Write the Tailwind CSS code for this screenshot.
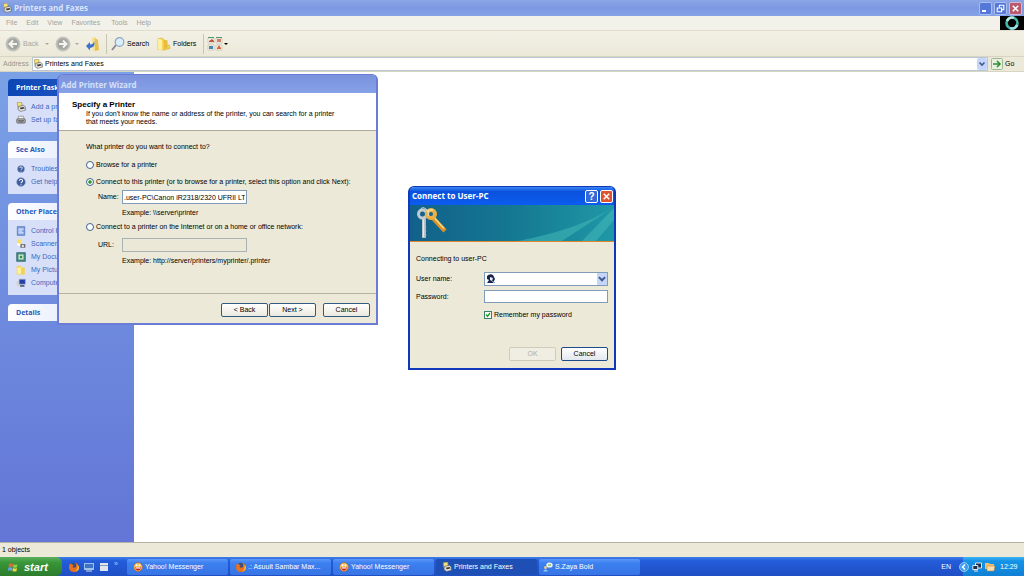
<!DOCTYPE html>
<html lang="en">
<head>
    <meta charset="UTF-8">
    <meta name="viewport" content="width=device-width, initial-scale=1.0">
    <title>Printers and Faxes</title>
    <script src="https://cdn.jsdelivr.net/npm/@tailwindcss/browser@4"></script>
</head>
<body class="relative h-screen overflow-hidden flex flex-col bg-white text-black text-[7px] leading-3 font-['Liberation_Sans',Arial,sans-serif]">

    <!-- Shared icons -->
    <svg class="hidden">
        <symbol id="printer" viewBox="0 0 16 16">
            <path d="M2 1l7-1 1 7-7 2z" fill="#f6e27a" stroke="#9a8a4a"/>
            <path d="M4 7l8-2 3 3v5l-8 2-4-3z" fill="#dcdcd6" stroke="#5a5a5a"/>
            <path d="M6 9l6-1 2 2-6 2z" fill="#3a3a3a"/>
            <path d="M8 13l5-1" stroke="#fff"/>
        </symbol>
        <symbol id="fax" viewBox="0 0 16 16">
            <path d="M4 2h8l1 5H3z" fill="#f4f4f0" stroke="#777"/>
            <rect x="1" y="6" width="14" height="7" rx="2" fill="#aaa" stroke="#555"/>
            <path d="M3 9h10M4 11h8" stroke="#444"/>
        </symbol>
        <symbol id="help" viewBox="0 0 16 16">
            <circle cx="8" cy="8" r="7" fill="#3c5a9c" stroke="#8fa4d0"/>
            <path d="M5.5 6.2a2.5 2.5 0 1 1 3.4 2.3q-.9.4-.9 1.4M8 11.5v1.6" fill="none" stroke="#fff" stroke-width="1.7"/>
        </symbol>
        <symbol id="folder" viewBox="0 0 16 16">
            <path d="M1 2l5-1 2 2 1 7 5-1 1 4-7 2-7-1z" fill="#f1ce4c" stroke="#d8b040" stroke-width=".6"/>
            <path d="M8 3l4 1v8l-4 2z" fill="#e8bc3c"/>
            <path d="M1 2l5 1v12l-5-1z" fill="#fdf0a0"/>
        </symbol>
        <symbol id="smiley" viewBox="0 0 16 16">
            <circle cx="8" cy="8" r="7" fill="#f9c458" stroke="#b8602a"/>
            <path d="M3 8h10q-.5 5.500-5 5.500t-5-5.500z" fill="#c8201a"/>
            <path d="M4 8.500h8v2H4z" fill="#fff"/>
            <circle cx="5.500" cy="5" r="1.400" fill="#fff"/><circle cx="10.500" cy="5" r="1.400" fill="#fff"/>
        </symbol>
        <symbol id="firefox" viewBox="0 0 16 16">
            <circle cx="8" cy="8" r="7" fill="#35507f"/>
            <path d="M1 3q3-1 4 1l3 1q-3 1-2 3 2 2 5 0 2-3-1-7 6 2 6 8-1 7-8 7-7 0-8-7 0-3 1-6z" fill="#e8701f"/>
            <path d="M13 4q3 8-4 11 7 0 7-7z" fill="#f9c53a"/>
        </symbol>
        <symbol id="down" viewBox="0 0 8 8">
            <path d="M1.500 2.500L4 5l2.500-2.500" fill="none" stroke="#3f5a92" stroke-width="1.600"/>
        </symbol>
        <symbol id="close" viewBox="0 0 12 12">
            <path d="M3 3l6 6M9 3l-6 6" stroke="#fff" stroke-width="1.700"/>
        </symbol>
    </svg>

    <!-- Title bar -->
    <header class="h-4 shrink-0 flex items-center gap-0.5 px-0.5 bg-linear-to-b from-[#8ba6e6] via-[#7b98e2] to-[#86a3e8]">
        <svg class="size-2.5"><use href="#printer"/></svg>
        <h1 class="flex-1 text-[8px] font-bold text-[#dbe5fa] font-['Open_Sans',sans-serif]">Printers and Faxes</h1>
        <button aria-label="Minimize" class="size-[13px] rounded-xs border border-[#a9bdf0] bg-[#5578d8] flex items-end p-0.5"><span class="w-1 h-0.5 bg-white"></span></button>
        <button aria-label="Restore" class="size-[13px] rounded-xs border border-[#a9bdf0] bg-[#5578d8]">
            <svg class="size-[11px]" viewBox="0 0 10 10" fill="none" stroke="#fff"><path d="M4 4V2h4v4H6"/><path d="M2 4.500h4V8H2z"/></svg>
        </button>
        <button aria-label="Close" class="size-[13px] rounded-xs border border-[#d5b5d0] bg-[#b8596e]"><svg class="size-[11px]"><use href="#close"/></svg></button>
    </header>

    <!-- Menu -->
    <nav class="h-[15px] shrink-0 flex items-center bg-[#f3f2ea] border-b border-[#e0ddcc] text-[#a5a399]">
        <div class="flex flex-1 gap-[9px] pl-1.5">
            <button>File</button><button>Edit</button><button>View</button><button>Favorites</button><button class="pl-0.5">Tools</button><button>Help</button>
        </div>
        <div class="w-6 h-full bg-black flex items-center justify-center">
            <svg class="size-3.5" viewBox="0 0 14 14" fill="none" stroke-width="2.600"><circle cx="7" cy="7" r="5.500" stroke="#3fb8a8"/><path d="M2 5A5.500 5.500 0 0 1 9 1.900" stroke="#b8e8e0"/><path d="M12.100 9A5.500 5.500 0 0 1 5 12.100" stroke="#a5dee8"/></svg>
        </div>
    </nav>

    <!-- Toolbar -->
    <div class="h-[26px] shrink-0 flex items-center bg-linear-to-b from-[#f3f1e6] to-[#ece9d8] border-b border-[#d8d5c4] pl-[5px]">
        <button disabled class="w-[50px] flex items-center gap-0.5 text-[#a9a79b]">
            <svg class="size-4" viewBox="0 0 16 16"><circle cx="8" cy="8" r="7.500" fill="#c5c5c0"/><circle cx="8" cy="8" r="6" fill="#a4a4a0" stroke="#bdbdb8"/><path d="M12 8H5M8 4.500L4.500 8 8 11.500" fill="none" stroke="#f5f5f0" stroke-width="2"/></svg>
            Back
            <svg class="ml-1 w-1 h-0.5" viewBox="0 0 4 2"><path d="M0 0h4L2 2z" fill="#a9a79b"/></svg>
        </button>
        <button disabled aria-label="Forward" class="w-[31px] flex items-center gap-1">
            <svg class="size-4" viewBox="0 0 16 16"><circle cx="8" cy="8" r="7.500" fill="#c5c5c0"/><circle cx="8" cy="8" r="6" fill="#a4a4a0" stroke="#bdbdb8"/><path d="M4 8h7M8 4.500l3.500 3.500L8 11.500" fill="none" stroke="#f5f5f0" stroke-width="2"/></svg>
            <svg class="w-1 h-0.5" viewBox="0 0 4 2"><path d="M0 0h4L2 2z" fill="#a9a79b"/></svg>
        </button>
        <button aria-label="Up" class="w-5">
            <svg class="size-3.5" viewBox="0 0 14 14"><path d="M6 1l3-1 1 2v12H7z" fill="#f6e08a"/><path d="M9 1l3 2 1 10-4 1z" fill="#e6c050"/><path d="M0 9l4-4v2.500q4 0 4-4 2 7-4 7.500v2.500z" fill="#3f73c9"/></svg>
        </button>
        <span class="w-px h-5 bg-[#c9c6b6]"></span>
        <button class="w-[50px] flex items-center gap-0.5 pl-1">
            <svg class="size-3.5" viewBox="0 0 14 14"><path d="M1 13l4-5" stroke="#8a8a96" stroke-width="2"/><circle cx="8.500" cy="5" r="4.300" fill="#d9eefa" stroke="#8ca7c4" stroke-width="1.200"/></svg>
            Search
        </button>
        <button class="w-[46px] flex items-center gap-0.5">
            <svg class="size-3.5 shrink-0"><use href="#folder"/></svg>
            Folders
        </button>
        <span class="w-px h-5 bg-[#c9c6b6]"></span>
        <button aria-label="Views" class="flex items-center gap-px pl-[3px]">
            <svg class="size-4" viewBox="0 0 16 16"><path d="M1 2h6v5H1zM9 2h6v5H9zM1 9h6v5H1zM9 9h6v5H9z" fill="#f8f6ee" stroke="#c4beb0" stroke-width=".7"/><path d="M2 5l3-2 2 2v1H2z" fill="#c0533b"/><path d="M10 3h4v3h-4z" fill="#d0806a"/><path d="M2 10h4v3H2z" fill="#4b86b0"/><path d="M10 12l2-3 2 3v1h-4z" fill="#d0683a"/><path d="M1 1.500h6M9 1.500h6" stroke="#4f9a68"/></svg>
            <svg class="w-1 h-0.5" viewBox="0 0 4 2"><path d="M0 0h4L2 2z" fill="#000"/></svg>
        </button>
    </div>

    <!-- Address -->
    <div class="h-[15px] shrink-0 flex items-center bg-[#ece9d8] border-b border-[#d8d5c4]">
        <label for="address" class="w-8 pl-[3px] text-[#98968a]">Address</label>
        <div class="flex-1 h-full flex items-center bg-white border border-[#b9c6d6] gap-0.5">
            <svg class="size-2.5"><use href="#printer"/></svg>
            <input id="address" value="Printers and Faxes" class="flex-1 h-3 outline-none">
            <button aria-label="Show addresses" class="w-2.5 h-3 bg-[#c6d5fa] rounded-xs"><svg class="w-2.5 h-2"><use href="#down"/></svg></button>
        </div>
        <button class="w-9 flex items-center gap-0.5 pl-[3px]">
            <svg class="size-3" viewBox="0 0 12 12"><rect x=".5" y=".5" width="11" height="11" rx="1" fill="#e6f0dc" stroke="#a0b890"/><path d="M2 6h7M6 3l3 3-3 3" fill="none" stroke="#2f8a3a" stroke-width="1.500"/></svg>
            Go
        </button>
    </div>

    <!-- Task pane -->
    <main class="flex-1 min-h-0 flex">
        <aside class="w-[134px] p-2 pt-[7px] flex flex-col gap-[9px] bg-linear-to-b from-[#7aa1e6] to-[#6375d6] text-[#3c64c0]">
            <section>
                <h2 class="h-[17px] pl-2 leading-[18px] rounded-t-sm bg-linear-to-r from-[#0a46b4] to-[#2c60cc] text-white font-bold font-['Open_Sans',sans-serif]">Printer Tasks</h2>
                <ul class="pt-1 pb-1.5 pl-2 bg-[#d7e0f8]">
                    <li><a href="#" class="h-[13px] flex items-center gap-[5px]"><svg class="size-2.5"><use href="#printer"/></svg>Add a printer</a></li>
                    <li><a href="#" class="h-[13px] flex items-center gap-[5px]"><svg class="size-2.5"><use href="#fax"/></svg>Set up faxing</a></li>
                </ul>
            </section>
            <section>
                <h2 class="h-[17px] pl-2 leading-[18px] rounded-t-sm bg-linear-to-r from-white to-[#d0dcf8] text-[#2a58b8] font-bold font-['Open_Sans',sans-serif]">See Also</h2>
                <ul class="pt-1 pb-1.5 pl-2 bg-[#d7e0f8]">
                    <li><a href="#" class="h-[13px] flex items-center gap-[5px]"><svg class="size-2.5 p-px"><use href="#help"/></svg>Troubleshoot</a></li>
                    <li><a href="#" class="h-[13px] flex items-center gap-[5px]"><svg class="size-2.5"><use href="#help"/></svg>Get help</a></li>
                </ul>
            </section>
            <section>
                <h2 class="h-[17px] pl-2 leading-[18px] rounded-t-sm bg-linear-to-r from-white to-[#d0dcf8] text-[#2a58b8] font-bold font-['Open_Sans',sans-serif]">Other Places</h2>
                <ul class="pt-1 pb-1.5 pl-2 bg-[#d7e0f8]">
                    <li><a href="#" class="h-[13px] flex items-center gap-[5px]"><svg class="size-2.5" viewBox="0 0 16 16"><path d="M2 1h12v14H2z" fill="#7da0e4" stroke="#4868b8"/><path d="M4 5h8M4 8h6M4 11h8" stroke="#fff" stroke-width="1.500"/></svg>Control Panel</a></li>
                    <li><a href="#" class="h-[13px] flex items-center gap-[5px]"><svg class="size-2.5" viewBox="0 0 16 16"><path d="M1 1l6-1 3 7-7 2z" fill="#f5df70"/><path d="M2 8l9 3" stroke="#fff" stroke-width="3"/><rect x="7" y="8" width="8" height="6" rx="1" fill="#6a6a70"/><circle cx="11" cy="11" r="2" fill="#ddd"/></svg>Scanners</a></li>
                    <li><a href="#" class="h-[13px] flex items-center gap-[5px]"><svg class="size-2.5" viewBox="0 0 16 16"><path d="M1 1h14v14H1z" fill="#3f8a80" stroke="#2c5d6c"/><path d="M4 4h8v8H4z" fill="#d8efd0"/><path d="M6 6h4v4H6z" fill="#3c8a58"/></svg>My Documents</a></li>
                    <li><a href="#" class="h-[13px] flex items-center gap-[5px]"><svg class="size-2.5" viewBox="0 0 16 16"><path d="M1 2l7-1v3h6v11H1z" fill="#f3d250"/><path d="M2 4h6v10H2z" fill="#fdf0a0"/></svg>My Pictures</a></li>
                    <li><a href="#" class="h-[13px] flex items-center gap-[5px]"><svg class="size-2.5" viewBox="0 0 16 16"><path d="M1 5h4v8H1z" fill="#d5d5d0"/><path d="M5 2h10v8H5z" fill="#2340a8" stroke="#aab0c4"/><path d="M7 11h6l1 3H6z" fill="#555c74"/></svg>Computer</a></li>
                </ul>
            </section>
            <section>
                <h2 class="h-[17px] pl-2 leading-[18px] rounded-t-sm bg-linear-to-r from-white to-[#d0dcf8] text-[#2a58b8] font-bold font-['Open_Sans',sans-serif]">Details</h2>
            </section>
        </aside>
    </main>

    <!-- Status bar -->
    <div class="h-[15px] shrink-0 flex items-center pl-0.5 bg-[#ece9d8] border-t border-[#b5b2a4]">1 objects</div>

    <!-- Taskbar -->
    <footer class="h-[19px] shrink-0 flex items-center bg-linear-to-b from-[#3f80ea] via-[#245cda] via-20% to-[#1f4fc4] text-white">
        <button class="w-[62px] h-full flex items-center gap-1.5 pl-2 rounded-r-md bg-linear-to-b from-[#5cb05c] via-[#389638] via-30% to-[#2c7c2c] text-[11px] font-bold italic">
            <svg class="size-2.5" viewBox="0 0 10 10"><path d="M1 2q2-1.500 4 0L4.500 5q-2-1-4 0z" fill="#e8643a"/><path d="M5.500 2.200q2 1 4 0L9 5.200q-2 1-4 0z" fill="#8ccf4c"/><path d="M.4 5.700q2-1 4 0L4 8.700q-2-1-4 0z" fill="#6ca4f0"/><path d="M5 6q2 1 4 0l-.5 3q-2 1-4 0z" fill="#f8d44a"/></svg>
            start
        </button>
        <div class="w-[65px] flex items-center gap-[5px] pl-[7px]">
            <button aria-label="Firefox" class="size-2.5"><svg class="size-2.5"><use href="#firefox"/></svg></button>
            <button aria-label="Show desktop" class="size-2.5"><svg class="size-2.5" viewBox="0 0 10 10"><path d="M0 1h10v7H0z" fill="#9cc0ec"/><path d="M1 2h8v4H1z" fill="#3d74c4"/><path d="M2 9h6" stroke="#ddd"/></svg></button>
            <button aria-label="Window" class="size-2.5"><svg class="size-2.5" viewBox="0 0 10 10"><path d="M1 1h8v8H1z" fill="#dfe6ee"/><path d="M1 3.500h8" stroke="#8a9cb8"/></svg></button>
            <span class="pb-1.5 text-[#b8d0f8]">»</span>
        </div>
        <div class="flex-1 flex gap-0.5">
            <button class="w-[101px] h-4 flex items-center gap-0.5 pl-1.5 rounded-xs bg-linear-to-b from-[#5c98f8] via-[#3c80f0] via-25% to-[#3874e4]"><svg class="size-2.5"><use href="#smiley"/></svg>Yahoo! Messenger</button>
            <button class="w-[101px] h-4 flex items-center gap-0.5 pl-1.5 rounded-xs bg-linear-to-b from-[#5c98f8] via-[#3c80f0] via-25% to-[#3874e4]"><svg class="size-2.5"><use href="#firefox"/></svg>.: Asuult Sambar Max...</button>
            <button class="w-[101px] h-4 flex items-center gap-0.5 pl-1.5 rounded-xs bg-linear-to-b from-[#5c98f8] via-[#3c80f0] via-25% to-[#3874e4]"><svg class="size-2.5"><use href="#smiley"/></svg>Yahoo! Messenger</button>
            <button class="w-[101px] h-4 flex items-center gap-0.5 pl-1.5 rounded-xs bg-[#1e4fb4]"><svg class="size-2.5"><use href="#printer"/></svg>Printers and Faxes</button>
            <button class="w-[101px] h-4 flex items-center gap-0.5 pl-1 rounded-xs bg-linear-to-b from-[#5c98f8] via-[#3c80f0] via-25% to-[#3874e4]">
                <svg class="size-2.5" viewBox="0 0 10 10"><ellipse cx="6.500" cy="3" rx="3.200" ry="2.600" fill="#f2f6f0"/><path d="M5 3h3" stroke="#4b9a4b"/><circle cx="2.500" cy="5.500" r="1.500" fill="#e8c88a"/><path d="M0 9.500q2.500-4 5 0z" fill="#8fcdf0"/></svg>
                S.Zaya Bold
            </button>
        </div>
        <span class="pr-3">EN</span>
        <div class="w-[61px] h-full flex items-center gap-[3px] bg-linear-to-b from-[#3cb4f4] via-[#1494e8] via-20% to-[#1080d4]">
            <svg class="-ml-1 size-2.5" viewBox="0 0 10 10"><circle cx="5" cy="5" r="4.500" fill="#3d9cf0" stroke="#a8d8fc" stroke-width=".8"/><path d="M6 2.500L3.500 5 6 7.500" fill="none" stroke="#fff" stroke-width="1.500"/></svg>
            <svg class="size-2.5" viewBox="0 0 10 10" stroke="#e4eaf0" fill="#1a3050"><path d="M3.500 1h6v5h-6z"/><path d="M.8 3.500h5v4h-5zM2 9h4"/></svg>
            <svg class="size-2.5" viewBox="0 0 10 10"><path d="M0 1h4l1 1h4v5H0z" fill="#f0c070"/><path d="M2 4h8L9 9H2z" fill="#fae0a8" stroke="#c47830" stroke-width=".5"/></svg>
            <span class="ml-0.5">12:29</span>
        </div>
    </footer>

    <!-- Add Printer Wizard -->
    <form class="absolute left-[57px] top-[74px] w-[321px] rounded-t-md border-2 border-t border-[#6a7cd6] bg-[#ece9d8]">
        <h2 class="h-[18px] pl-0.5 leading-5 rounded-t-sm text-[8px] font-bold text-[#d5e0f8] bg-linear-to-b from-[#7b92dc] to-[#86a2e8] font-['Open_Sans',sans-serif]">Add Printer Wizard</h2>
        <div class="h-[38px] pt-1.5 pl-[13px] leading-2 bg-white border-b border-[#aca899]">
            <h3 class="font-bold text-[8px] leading-[11px]">Specify a Printer</h3>
            <p class="pl-3.5">If you don't know the name or address of the printer, you can search for a printer<br>that meets your needs.</p>
        </div>
        <div class="h-[162px] pt-2.5 pl-[27px] flex flex-col">
            <p>What printer do you want to connect to?</p>
            <label class="mt-1.5 flex items-center gap-0.5"><input type="radio" name="target" class="appearance-none size-2 rounded-full border border-[#3a6490] bg-white">Browse for a printer</label>
            <label class="mt-[5px] flex items-center gap-0.5"><input type="radio" name="target" checked class="appearance-none size-2 rounded-full border border-[#3a6490] bg-white checked:bg-radial from-[#2ba02b] from-35% to-white to-45%">Connect to this printer (or to browse for a printer, select this option and click Next):</label>
            <div class="mt-0.5 h-3.5 flex items-center">
                <label for="name" class="w-9 pl-3">Name:</label>
                <input id="name" value=".user-PC\Canon iR2318/2320 UFRII LT" class="w-[125px] h-3.5 px-px bg-white border border-[#7f9db9] outline-none">
            </div>
            <p class="mt-[3px] pl-9">Example: \\server\printer</p>
            <label class="mt-0.5 flex items-center gap-0.5"><input type="radio" name="target" class="appearance-none size-2 rounded-full border border-[#3a6490] bg-white">Connect to a printer on the Internet or on a home or office network:</label>
            <div class="mt-[5px] h-3.5 flex items-center">
                <label for="url" class="w-9 pl-3">URL:</label>
                <input id="url" disabled class="w-[125px] h-3.5 px-px border border-[#a9b3b4] bg-[#ebe8d8]">
            </div>
            <p class="mt-[3px] pl-9">Example: http://server/printers/myprinter/.printer</p>
        </div>
        <div class="h-[30px] pr-1.5 pt-0.5 flex items-center justify-end gap-px border-t border-[#b5b2a2]">
            <button type="button" class="w-[47px] h-3.5 rounded-xs border border-[#305a82] bg-linear-to-b from-white to-[#ebe9de]">&lt; Back</button>
            <button type="button" class="w-[47px] h-3.5 rounded-xs border border-[#305a82] bg-linear-to-b from-white to-[#ebe9de]">Next &gt;</button>
            <button type="button" class="ml-1.5 w-[47px] h-3.5 rounded-xs border border-[#305a82] bg-linear-to-b from-white to-[#ebe9de]">Cancel</button>
        </div>
    </form>

    <!-- Connect to User-PC -->
    <form class="absolute left-[408px] top-[186px] w-[208px] rounded-t-md border-2 border-t border-[#1038b8] bg-[#ece9d8]">
        <div class="h-[18px] pl-0.5 pr-px flex items-center gap-0.5 rounded-t-sm bg-linear-to-b from-[#3a86f4] via-[#0a52dc] via-25% to-[#0c5cf0] text-white">
            <h2 class="flex-1 text-[8px] font-bold font-['Open_Sans',sans-serif]">Connect to User-PC</h2>
            <button type="button" aria-label="Help" class="size-[13px] leading-[11px] rounded-xs border border-white bg-[#3468d8] text-[10px] font-bold">?</button>
            <button type="button" aria-label="Close" class="size-[13px] rounded-xs border border-white bg-[#dc5430]"><svg class="size-[11px]"><use href="#close"/></svg></button>
        </div>
        <div class="border-b border-[#e0862c]">
            <svg class="block w-full h-9" viewBox="0 0 204 36" preserveAspectRatio="none">
                <defs><linearGradient id="sea"><stop offset="0" stop-color="#12608a"/><stop offset=".5" stop-color="#147892"/><stop offset="1" stop-color="#1f98a6"/></linearGradient></defs>
                <path d="M0 0h204v36H0z" fill="url(#sea)"/>
                <path d="M108 36Q170 24 204 2L152 36z" fill="#3fb4b4" opacity=".6"/>
                <path d="M172 36L204 3v12L186 36z" fill="#48bcbc" opacity=".5"/>
                <g fill="none">
                    <path d="M14 13v20" stroke="#aeb6be" stroke-width="4"/>
                    <path d="M13.500 14v18" stroke="#e6eaee" stroke-width="1.500"/>
                    <path d="M16 22h1M16 26h1M16 30h1" stroke="#607888"/>
                    <circle cx="12.500" cy="9" r="4" stroke="#c4cad0" stroke-width="3"/>
                    <path d="M23 13l12 13" stroke="#d8922a" stroke-width="4.500"/>
                    <path d="M24 12.500l10 11" stroke="#fbdc80" stroke-width="1.500"/>
                    <circle cx="21" cy="9" r="4" stroke="#eeb044" stroke-width="4"/>
                    <path d="M17 7q2-3 6-2" stroke="#fbe08c" stroke-width="1.500"/>
                    <path d="M10 5q2-4 6-1 4 3 2 7" stroke="#dfe3e8"/>
                </g>
            </svg>
        </div>
        <div class="px-1.5 pt-[11px] pb-[7px]">
            <p>Connecting to user-PC</p>
            <div class="mt-[7px] flex items-center">
                <label for="user" class="w-[68px]">User name:</label>
                <div class="relative flex-1">
                    <select id="user" class="block appearance-none w-full h-3.5 bg-white border border-[#7f9db9]"><option></option></select>
                    <svg class="absolute left-0.5 top-0.5 size-2.5" viewBox="0 0 10 10"><path d="M1 2q3-3 6-1l2 4-2 4H1l2-3-2-1z" fill="#18244c"/><path d="M4 3l3 1-1 3-2-1z" fill="#e8eef8"/><path d="M6 7l3 2" stroke="#78a0d8"/></svg>
                    <svg class="absolute right-px top-px w-2.5 h-3 bg-[#c6d5fa] pointer-events-none"><use href="#down"/></svg>
                </div>
            </div>
            <div class="mt-1 flex items-center">
                <label for="password" class="w-[68px]">Password:</label>
                <input id="password" type="password" class="flex-1 h-[13px] bg-white border border-[#7f9db9]">
            </div>
            <label class="mt-1.5 pl-[68px] flex items-center gap-0.5">
                <span class="relative size-2">
                    <input type="checkbox" checked class="block appearance-none size-2 border border-[#3c8070] bg-white">
                    <svg class="absolute inset-0 size-2" viewBox="0 0 8 8"><path d="M2 3.500l1.500 2L6 2" fill="none" stroke="#21a121" stroke-width="1.300"/></svg>
                </span>
                Remember my password
            </label>
            <div class="mt-[26px] flex justify-end gap-[5px]">
                <button type="button" disabled class="w-[47px] h-3.5 rounded-xs border border-[#d0ccbc] text-[#b0ad9c] bg-[#f0eee2]">OK</button>
                <button type="button" class="w-[47px] h-3.5 rounded-xs border border-[#1c4a8a] bg-linear-to-b from-white to-[#e2e8ee]">Cancel</button>
            </div>
        </div>
    </form>
</body>
</html>
